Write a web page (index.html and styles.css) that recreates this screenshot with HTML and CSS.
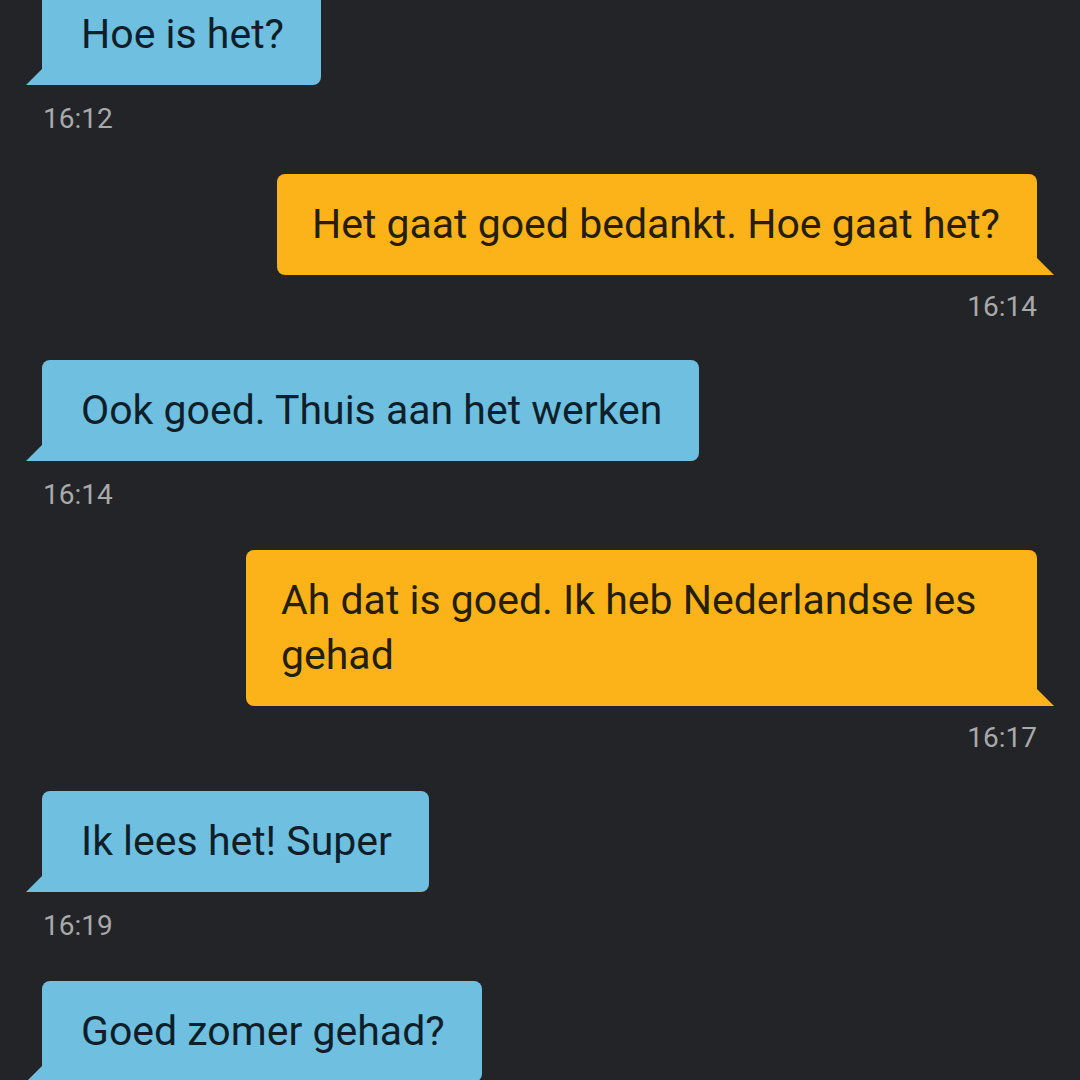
FILE: index.html
```html
<!DOCTYPE html>
<html lang="nl">
  <head>
    <meta charset="UTF-8" />
    <meta name="viewport" content="width=device-width, initial-scale=1.0" />
    <title>Chat</title>
    <link rel="stylesheet" href="styles.css">
  </head>
  <body>
    <div class="chat">
      <div class="msg in">
        <div class="bubble">Hoe is het?</div>
        <span class="time">16:12</span>
      </div>
      <div class="msg out">
        <div class="bubble">Het gaat goed bedankt. Hoe gaat het?</div>
        <span class="time">16:14</span>
      </div>
      <div class="msg in">
        <div class="bubble">Ook goed. Thuis aan het werken</div>
        <span class="time">16:14</span>
      </div>
      <div class="msg out">
        <div class="bubble wide">Ah dat is goed. Ik heb Nederlandse les gehad</div>
        <span class="time">16:17</span>
      </div>
      <div class="msg in">
        <div class="bubble">Ik lees het! Super</div>
        <span class="time">16:19</span>
      </div>
      <div class="msg in">
        <div class="bubble">Goed zomer gehad?</div>
      </div>
    </div>
  </body>
</html>
```

FILE: styles.css
```css
body {
  margin: 0;
  background: #232427;
  font-family: Roboto, "Liberation Sans", sans-serif;
  overflow: hidden;
  height: 1080px;
}
.chat {
  display: flex;
  flex-direction: column;
  margin-top: -16px;
  padding: 0 43px 0 42px;
}
.msg {
  display: flex;
  flex-direction: column;
}
.msg.in {
  align-items: flex-start;
  margin-bottom: 40px;
}
.msg.out {
  align-items: flex-end;
  margin-bottom: 38px;
}
.bubble {
  position: relative;
  padding: 23px 37px 23px 39px;
  font-size: 41px;
  line-height: 55px;
  border-radius: 8px;
}
.out .bubble {
  padding-left: 35px;
}
.bubble.wide {
  width: 719px;
}
.in .bubble {
  background: #6fbfe1;
  color: #0e1f29;
  border-bottom-left-radius: 0;
}
.out .bubble {
  background: #fcb31a;
  color: #261e0c;
  border-bottom-right-radius: 0;
}
.bubble::before {
  content: "";
  position: absolute;
  bottom: 0;
  width: 17px;
  height: 17px;
}
.in .bubble::before {
  left: -16px;
  background: #6fbfe1;
  clip-path: polygon(100% 0, 100% 100%, 0 100%);
}
.out .bubble::before {
  right: -17px;
  background: #fcb31a;
  clip-path: polygon(0 0, 100% 100%, 0 100%);
}
.time {
  margin-top: 19px;
  font-size: 28px;
  line-height: 30px;
  color: #a8a9aa;
}
.out .time {
  margin-top: 17px;
}
.in .time {
  padding-left: 1px;
}
```
